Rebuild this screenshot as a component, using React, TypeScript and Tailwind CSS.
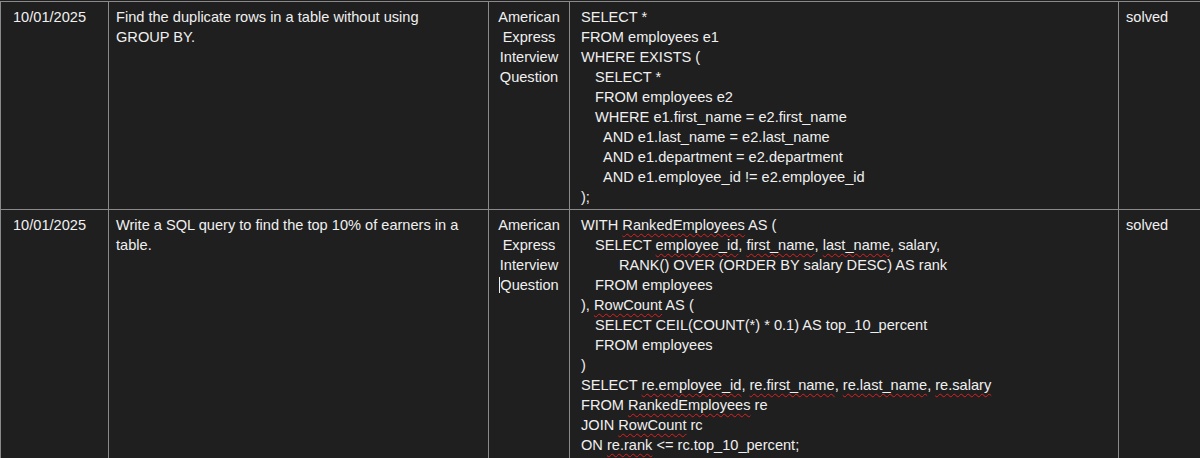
import React from "react";

const W = ({ children }: { children: React.ReactNode }) => (
  <span className="underline decoration-wavy decoration-[#e02020] decoration-1 underline-offset-[3px]">{children}</span>
);

const L = ({ i = 0, children }: { i?: number; children: React.ReactNode }) => (
  <div style={{ paddingLeft: i }} className="whitespace-pre">{children}</div>
);

export default function App() {
  const td = "border border-[#8a8a8a] align-top px-[7px] pt-[5px]";
  return (
    <div className="w-[1200px] h-[458px] bg-[#1f1f1f] text-[#f0f0f0] overflow-hidden" style={{ fontFamily: "'Liberation Sans', Arial, sans-serif" }}>
      <table className="border-collapse text-[14.6px] leading-[20px] mt-[1px]" style={{ tableLayout: "fixed", width: 1200 }}>
        <colgroup>
          <col style={{ width: 108 }} />
          <col style={{ width: 380 }} />
          <col style={{ width: 81 }} />
          <col style={{ width: 549 }} />
          <col style={{ width: 82 }} />
        </colgroup>
        <tbody>
          <tr className="h-[208px]">
            <td className={td + " pl-[12px]"}>10/01/2025</td>
            <td className={td}>Find the duplicate rows in a table without using<br />GROUP BY.</td>
            <td className={td + " text-center px-0"}>American<br />Express<br />Interview<br />Question</td>
            <td className={td + " px-[11px]"}>
              <L>SELECT *</L>
              <L>FROM employees e1</L>
              <L>WHERE EXISTS (</L>
              <L i={14}>SELECT *</L>
              <L i={14}>FROM employees e2</L>
              <L i={14}>WHERE e1.first_name = e2.first_name</L>
              <L i={22}>AND e1.last_name = e2.last_name</L>
              <L i={22}>AND e1.department = e2.department</L>
              <L i={22}>AND e1.employee_id != e2.employee_id</L>
              <L>);</L>
            </td>
            <td className={td}>solved</td>
          </tr>
          <tr className="h-[249px]">
            <td className={td + " pl-[12px]"}>10/01/2025</td>
            <td className={td}>Write a SQL query to find the top 10% of earners in a<br />table.</td>
            <td className={td + " text-center px-0"}>American<br />Express<br />Interview<br /><span className="border-l border-[#f0f0f0]">Question</span></td>
            <td className={td + " px-[11px]"}>
              <L>WITH <W>RankedEmployees</W> AS (</L>
              <L i={14}>SELECT <W>employee_id</W>, <W>first_name</W>, <W>last_name</W>, salary,</L>
              <L i={38}>RANK() OVER (ORDER BY salary DESC) AS rank</L>
              <L i={14}>FROM employees</L>
              <L>), <W>RowCount</W> AS (</L>
              <L i={14}>SELECT CEIL(COUNT(*) * 0.1) AS top_10_percent</L>
              <L i={14}>FROM employees</L>
              <L>)</L>
              <L>SELECT <W>re.employee_id</W>, <W>re.first_name</W>, <W>re.last_name</W>, <W>re.salary</W></L>
              <L>FROM <W>RankedEmployees</W> re</L>
              <L>JOIN <W>RowCount</W> rc</L>
              <L>ON <W>re.rank</W> &lt;= rc.top_10_percent;</L>
            </td>
            <td className={td}>solved</td>
          </tr>
        </tbody>
      </table>
    </div>
  );
}
